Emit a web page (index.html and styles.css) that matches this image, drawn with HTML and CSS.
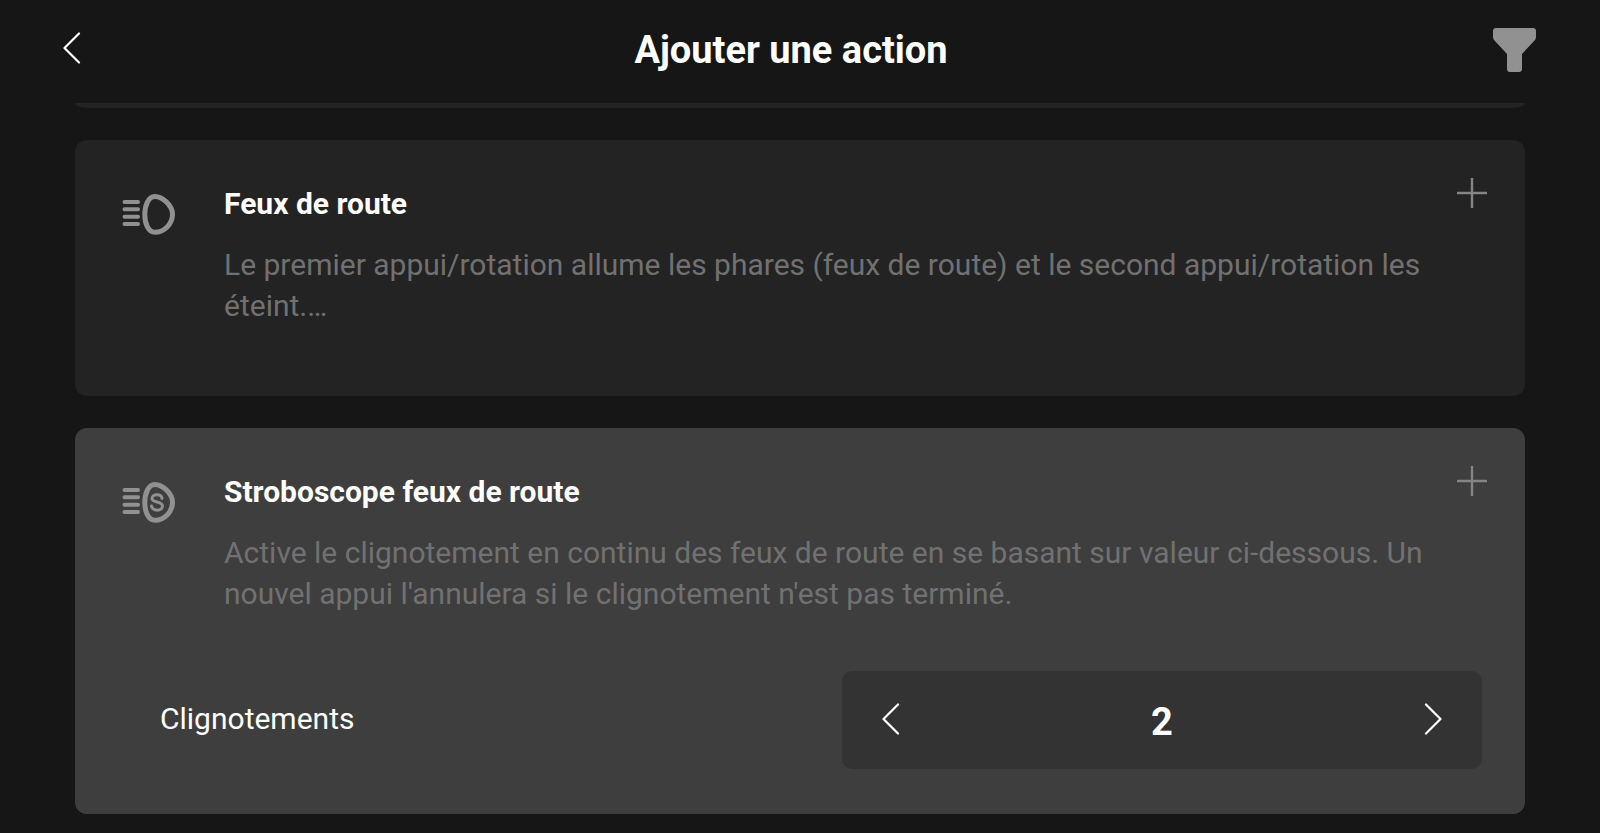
FILE: index.html
```html
<!DOCTYPE html>
<html lang="fr">
<head>
	<meta charset="utf-8">
	<meta name="viewport" content="width=device-width, initial-scale=1">
	<title>Ajouter une action</title>
	<link rel="stylesheet" href="styles.css">
</head>
<body>

	<header class="topbar">
		<button class="icon-btn back" type="button" aria-label="Retour">
			<svg width="18" height="32" viewBox="0 0 18 32"><path class="chevron" d="M16 1.500 1.500 16 16 30.500"/></svg>
		</button>
		<h1 class="page-title">Ajouter une action</h1>
		<button class="icon-btn" type="button" aria-label="Filtrer">
			<svg width="43" height="44" viewBox="0 0 43 44"><path class="funnel" d="M3 0H40Q43 0 43 3V9Q43 11 41.500 12.500L29 26V41Q29 44 26 44H17Q14 44 14 41V26L1.500 12.500Q0 11 0 9V3Q0 0 3 0Z"/></svg>
		</button>
	</header>

	<main class="list">
		<div class="card-end"></div>

		<article class="card">
			<svg class="lamp" width="56" height="44" viewBox="0 0 56 44">
				<path class="beam" d="M3.500 10H17M3.500 17.300H17M3.500 24.700H17M3.500 32H17"/>
				<path class="lens" d="M34 4.500C41 4.500 51.500 13 51.500 22.500C51.500 32 43 40.200 34 40.200C27 40.200 23.800 31 23.800 22.500S27 4.500 34 4.500Z"/>
			</svg>
			<div class="text">
				<h2 class="title">Feux de route</h2>
				<p class="desc">Le premier appui/rotation allume les phares (feux de route) et le second appui/rotation les éteint.…</p>
			</div>
			<button class="icon-btn add" type="button" aria-label="Ajouter Feux de route">
				<svg width="30" height="30" viewBox="0 0 30 30"><path class="plus" d="M15 0V30M0 15H30"/></svg>
			</button>
		</article>

		<article class="card selected">
			<svg class="lamp" width="56" height="44" viewBox="0 0 56 44">
				<path class="beam" d="M3.500 10H17M3.500 17.300H17M3.500 24.700H17M3.500 32H17"/>
				<path class="lens" d="M34 4.500C41 4.500 51.500 13 51.500 22.500C51.500 32 43 40.200 34 40.200C27 40.200 23.800 31 23.800 22.500S27 4.500 34 4.500Z"/>
				<path class="flash" d="M41 18.500C40.500 13.500 31 13.500 31 18.500 31 23 41.500 21 41.500 26 41.500 31.500 31 31.500 30.500 26"/>
			</svg>
			<div class="text">
				<h2 class="title">Stroboscope feux de route</h2>
				<p class="desc">Active le clignotement en continu des feux de route en se basant sur valeur ci-dessous. Un nouvel appui l'annulera si le clignotement n'est pas terminé.</p>
			</div>
			<button class="icon-btn add" type="button" aria-label="Ajouter Stroboscope feux de route">
				<svg width="30" height="30" viewBox="0 0 30 30"><path class="plus" d="M15 0V30M0 15H30"/></svg>
			</button>
			<div class="option">
				<label class="option-name" for="blinks">Clignotements</label>
				<div class="stepper">
					<button class="icon-btn" type="button" aria-label="Moins">
						<svg width="18" height="32" viewBox="0 0 18 32"><path class="chevron" d="M16 1.500 1.500 16 16 30.500"/></svg>
					</button>
					<input class="value" id="blinks" type="text" inputmode="numeric" value="2">
					<button class="icon-btn" type="button" aria-label="Plus">
						<svg width="18" height="32" viewBox="0 0 18 32"><path class="chevron" d="M2 1.500 16.500 16 2 30.500"/></svg>
					</button>
				</div>
			</div>
		</article>
	</main>

</body>
</html>
```
FILE: styles.css
```css
*{
	box-sizing: border-box;
}
body{
	margin: 0;
	min-height: 100vh;
	background-color: #161616;
	color: #fff;
	font-family: Roboto, "Liberation Sans", sans-serif;
	font-size: 30px;
}
h1, h2, p{
	margin: 0;
}
svg{
	display: block;
	fill: none;
}

.icon-btn{
	padding: 0;
	border: 0;
	background: none;
	cursor: pointer;
}
.chevron{
	stroke: #fff;
	stroke-width: 2.2;
	stroke-linecap: round;
	stroke-linejoin: round;
}
.funnel{
	fill: #919191;
}
.plus{
	stroke: #858585;
	stroke-width: 2.4;
}

.topbar{
	display: flex;
	align-items: center;
	justify-content: space-between;
	padding: 20px 64px 23px 63px;
}
.back{
	width: 26px;
	padding-bottom: 4px;
}
.page-title{
	font-size: 38px;
	line-height: 60px;
	font-weight: 700;
}

.list{
	display: flex;
	flex-direction: column;
	padding: 0 75px 20px;
}
/* bottom edge of the card scrolled under the top bar */
.card-end{
	height: 5px;
	margin-bottom: 32px;
	border-radius: 0 0 12px 12px / 0 0 5px 5px;
	background-color: #232323;
}
.card{
	display: grid;
	grid-template-columns: 56px 1fr 30px;
	column-gap: 26px;
	padding: 44px 38px 28px 46px;
	margin-bottom: 32px;
	border-radius: 12px;
	background-color: #232323;
}
.card.selected{
	margin-bottom: 0;
	background-color: #3e3e3e;
}

.lamp{
	margin-top: 8px;
	stroke: #919191;
	stroke-linecap: round;
}
.beam{
	stroke-width: 4;
}
.lens{
	stroke-width: 5;
}
.flash{
	stroke-width: 3;
}

.text{
	margin-left: 21px;
}
.title{
	font-size: 30px;
	line-height: 40px;
	font-weight: 700;
}
.desc{
	min-height: 124px;
	margin-top: 20px;
	line-height: 41px;
	color: #717171;
}
.add{
	align-self: start;
	margin-top: -6px;
}

.option{
	grid-column: 1 / -1;
	display: flex;
	align-items: center;
	justify-content: space-between;
	margin: 15px 5px 17px 39px;
}
.option-name{
	line-height: 40px;
	padding-bottom: 2px;
}
.stepper{
	display: flex;
	align-items: center;
	width: 640px;
	height: 98px;
	padding: 0 40px;
	border-radius: 10px;
	background-color: #333;
}
.stepper .icon-btn{
	padding-bottom: 2px;
}
.value{
	flex: 1;
	min-width: 0;
	padding: 4px 0 0;
	border: 0;
	background: none;
	color: #fff;
	font-family: inherit;
	font-size: 38px;
	font-weight: 700;
	text-align: center;
}
```
